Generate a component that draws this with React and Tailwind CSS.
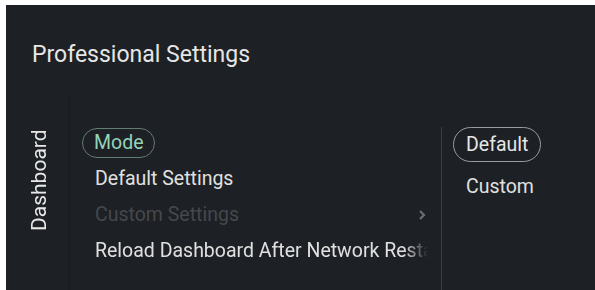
const items = [
  { label: 'Mode', selected: true },
  { label: 'Default Settings' },
  { label: 'Custom Settings', disabled: true, arrow: true },
  { label: 'Reload Dashboard After Network Restart', fade: true },
]

export default function App() {
  return (
    <div className="w-[595px] h-[290px] bg-white pl-[6px] pt-[5px] overflow-hidden font-['Roboto',sans-serif]">
      <div className="w-full h-full bg-[#1d2024] flex flex-col">
        {/* title */}
        <div className="h-[87px] shrink-0 pl-[26px] pt-[36px]">
          <h1 className="text-[23px] leading-[28px] text-[#e6e6e6]">
            Professional Settings
          </h1>
        </div>

        <div className="flex flex-1 min-h-0">
          {/* sidebar */}
          <div className="w-[64px] shrink-0 border-r border-[#191b1e] flex justify-center pl-[3px] pt-[35px]">
            <span className="[writing-mode:vertical-rl] rotate-180 text-[21px] leading-[24px] text-[#e8e8e8] h-[106px] text-center whitespace-nowrap">
              Dashboard
            </span>
          </div>

          {/* menu list */}
          <div className="w-[371px] shrink-0 pt-[33px] pl-[12px] pr-[12px]">
            {items.map((item) => (
              <div key={item.label} className="h-[36px] flex items-center relative">
                {item.selected ? (
                  <span className="border-[1.5px] border-[#647d73] rounded-full px-[11px] h-[30px] flex items-center text-[19.5px] text-[#95d3b8]">
                    {item.label}
                  </span>
                ) : (
                  <span
                    className={`pl-[13px] text-[19.5px] whitespace-nowrap overflow-hidden ${
                      item.disabled ? 'text-[#45484c]' : 'text-[#e0e0e0]'
                    } ${item.fade ? 'w-[346px] [mask-image:linear-gradient(to_right,black_93%,transparent)]' : ''}`}
                  >
                    {item.label}
                  </span>
                )}
                {item.arrow && (
                  <span className="absolute right-[3px] text-[#6a6d71]">
                    <svg width="8" height="12" viewBox="0 0 8 12" fill="none">
                      <path d="M2 2l4 4-4 4" stroke="currentColor" strokeWidth="2.2" />
                    </svg>
                  </span>
                )}
              </div>
            ))}
          </div>

          {/* options */}
          <div className="flex-1 pt-[35px]">
            <div className="h-full border-l border-[#3a3d41] pl-[11px]">
              <div className="flex">
                <span className="border-[1.5px] border-[#9a9c9e] rounded-full px-[12px] h-[35px] flex items-center text-[19.5px] text-[#e6e6e6]">
                  Default
                </span>
              </div>
              <div className="h-[50px] flex items-center pl-[13px] text-[19.5px] text-[#e0e0e0]">
                Custom
              </div>
            </div>
          </div>
        </div>
      </div>
    </div>
  )
}
